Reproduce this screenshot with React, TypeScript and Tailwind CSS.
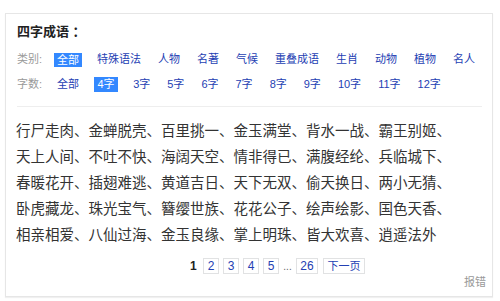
import React from "react";

const cats = ["特殊语法", "人物", "名著", "气候", "重叠成语", "生肖", "动物", "植物", "名人"];
const nums = ["3字", "5字", "6字", "7字", "8字", "9字", "10字", "11字", "12字"];
const lines = [
  "行尸走肉、金蝉脱壳、百里挑一、金玉满堂、背水一战、霸王别姬、",
  "天上人间、不吐不快、海阔天空、情非得已、满腹经纶、兵临城下、",
  "春暖花开、插翅难逃、黄道吉日、天下无双、偷天换日、两小无猜、",
  "卧虎藏龙、珠光宝气、簪缨世族、花花公子、绘声绘影、国色天香、",
  "相亲相爱、八仙过海、金玉良缘、掌上明珠、皆大欢喜、逍遥法外",
];

const font = { fontFamily: '"Liberation Sans", "Noto Sans CJK SC", sans-serif' };

export default function App() {
  return (
    <div className="w-[500px] h-[301px] bg-white overflow-hidden" style={font}>
      <div className="ml-[5px] mt-[13px] w-[488px] h-[284px] border border-[#e6e6e6] shadow-[0_1px_1px_rgba(0,0,0,0.06)] bg-white pl-[11px] pt-[9px] relative">
        <div className="h-[18px] leading-[18px] text-[13px] font-bold text-[#222]">四字成语 ：</div>
        <div className="mt-[6px] h-[25px] flex items-center text-[11px]">
          <span className="text-[#999] w-[37px]">类别:</span>
          <span className="bg-[#3388ff] text-white px-[3px] h-[14px] leading-[14px]">全部</span>
          {cats.map((c, i) => (
            <span key={c} className={`${i === 0 ? "ml-[12px]" : "ml-[11px]"} px-[3px] text-[#2440b3]`}>{c}</span>
          ))}
        </div>
        <div className="h-[25px] flex items-center text-[11px]">
          <span className="text-[#999] w-[37px]">字数:</span>
          <span className="px-[3px] text-[#2440b3]">全部</span>
          <span className="ml-[12px] bg-[#3388ff] text-white px-[3.5px] h-[15px] leading-[15px]">4字</span>
          {nums.map((c, i) => (
            <span key={c} className={`${i === 0 ? "ml-[12px]" : "ml-[11px]"} px-[3px] text-[#2440b3]`}>{c}</span>
          ))}
        </div>
        <div className="mt-[9px] mr-[10px] border-t border-[#eeeeee]" />
        <div className="mt-[10px] -ml-[1px] text-[14.5px] leading-[26px] text-[#333]" style={{ fontFamily: '"Noto Sans CJK SC", sans-serif' }}>
          {lines.map((l) => (
            <div key={l} className="whitespace-nowrap">{l}</div>
          ))}
        </div>
        <div className="mt-[11px] flex items-center h-[16px] pl-[173px] text-[12px]">
          <span className="font-bold text-[#222] w-[13px]">1</span>
          {["2", "3", "4", "5"].map((n, i) => (
            <span key={n} className={`${i === 0 ? "" : "ml-[4px]"} w-[16px] h-[16px] leading-[14px] text-center border border-[#e1e2e3] text-[#2440b3]`}>{n}</span>
          ))}
          <span className="w-[17px] text-center text-[#666] text-[10px]">...</span>
          <span className="w-[22px] h-[16px] leading-[14px] text-center border border-[#e1e2e3] text-[#2440b3]">26</span>
          <span className="ml-[5px] w-[42px] h-[16px] leading-[14px] text-center border border-[#e1e2e3] text-[#2440b3] text-[11px]">下一页</span>
        </div>
        <div className="mt-[1px] h-[14px] leading-[14px] text-right pr-[6px] text-[11px] text-[#999]">报错</div>
      </div>
    </div>
  );
}
